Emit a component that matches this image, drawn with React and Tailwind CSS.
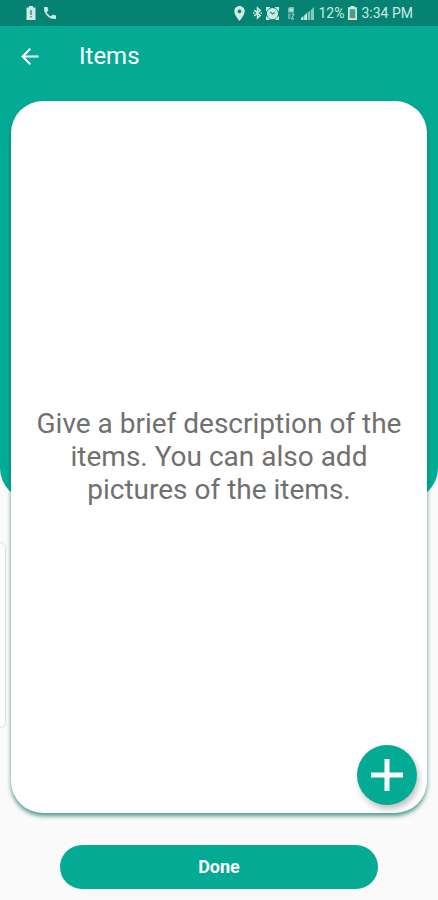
import { useState } from "react";

const DESCRIPTION =
  "Give a brief description of the items. You can also add pictures of the items.";

function BatteryAlertIcon() {
  return (
    <svg viewBox="0 0 10 14" className="w-[10px] h-[14px]" aria-hidden="true">
      <path fill="currentColor" d="M3 0h4v1.500h2.500V14h-9V1.500H3z" />
      <path fill="#2f8f80" d="M4.300 4h1.400v5H4.300zM4.300 10h1.400v1.500H4.300z" />
    </svg>
  );
}

function CallIcon() {
  return (
    <svg viewBox="3 3 18 18" className="w-3 h-3" fill="currentColor" stroke="currentColor" strokeWidth="0.600" aria-hidden="true">
      <path d="M6.620 10.790c1.440 2.830 3.760 5.140 6.590 6.590l2.200-2.200c.27-.27.67-.36 1.020-.24 1.120.37 2.330.57 3.570.57.55 0 1 .45 1 1V20c0 .55-.45 1-1 1C10.610 21 3 13.390 3 4c0-.55.45-1 1-1h3.500c.55 0 1 .45 1 1 0 1.250.2 2.450.57 3.570.11.35.03.74-.25 1.020z" />
    </svg>
  );
}

function LocationIcon() {
  return (
    <svg viewBox="5 2 14 20" className="w-[11px] h-[15px]" fill="currentColor" aria-hidden="true">
      <path d="M12 2C8.130 2 5 5.130 5 9c0 5.250 7 13 7 13s7-7.750 7-13c0-3.870-3.130-7-7-7zm0 9.500a2.500 2.500 0 1 1 0-5 2.500 2.500 0 0 1 0 5z" />
    </svg>
  );
}

function BluetoothIcon() {
  return (
    <svg viewBox="0 0 9 14" className="w-[9px] h-[14px]" fill="none" stroke="currentColor" strokeWidth="1.500" aria-hidden="true">
      <path d="M1.200 4l6 5.500L4.500 12v-10l2.700 2.500L1.200 10" />
      <path d="M0 7h1.400M7.600 7H9" />
    </svg>
  );
}

function AlarmIcon() {
  return (
    <svg viewBox="0 0 13 13" className="w-[13px] h-[13px]" aria-hidden="true">
      <circle cx="6.500" cy="6.700" r="5.600" fill="currentColor" />
      <path fill="currentColor" d="M0 0h4.500L0 4.500zM13 0H8.500L13 4.500zM0 9l4 3.500-1 .5H0zM13 9l-4 3.500 1 .5h3z" />
      <path d="M4.200 4.800l2.300 2.300 2.300-1.500" fill="none" stroke="#23897a" strokeWidth="1.200" />
    </svg>
  );
}

function SimIcon() {
  return (
    <svg viewBox="0 0 8 13" className="w-2 h-[13px]" aria-hidden="true">
      <path fill="currentColor" opacity="0.600" d="M1 1.500L2.500 0H7v5.500H1z" />
      <path fill="currentColor" opacity="0.450" d="M1 6.500h2.500V12H1z" />
      <path d="M3 2h2.500v2H3zM4.500 7H7L4.500 12H7" fill="none" stroke="currentColor" strokeWidth="0.900" />
    </svg>
  );
}

function SignalIcon() {
  return (
    <svg viewBox="0 0 13 13" className="w-[13px] h-[13px]" fill="currentColor" aria-hidden="true">
      <path d="M0 13v-2l2.500-2v4zM3.200 13V8.400L6 6v7z" />
      <path d="M6.700 13V5.500l2.600-2V13zM10 13V3l3-3v13z" opacity="0.650" />
    </svg>
  );
}

function BatteryLowIcon() {
  return (
    <svg viewBox="0 0 9 14" className="w-[9px] h-[14px]" aria-hidden="true">
      <path fill="currentColor" d="M2.500 0h4v1.300H9V14H0V1.300h2.500z" />
      <path fill="#4b9d91" d="M1.700 3.200h5.600v7.800H1.700z" />
      <path fill="#c46a62" d="M1.700 11h5.600v1.200H1.700z" />
    </svg>
  );
}

function BackIcon() {
  return (
    <svg viewBox="0 0 18 17" className="w-[18px] h-[17px]" fill="none" stroke="currentColor" strokeWidth="2" aria-hidden="true">
      <path d="M17.500 8.500H1.500M9.300 .8L1.600 8.500l7.700 7.700" />
    </svg>
  );
}

function PlusIcon() {
  return (
    <svg viewBox="0 0 32 32" className="w-8 h-8" fill="currentColor" aria-hidden="true">
      <path d="M13.500 0h5v13.500H32v5H18.500V32h-5V18.500H0v-5h13.500z" />
    </svg>
  );
}

function StatusBar() {
  return (
    <div className="flex h-[26px] items-center justify-between bg-[#058272] pl-[26px] pr-[25px] text-[#cdebe4]">
      <div className="flex items-center gap-2">
        <BatteryAlertIcon />
        <CallIcon />
      </div>

      <div className="flex items-center gap-1 text-sm">
        <LocationIcon />
        <div className="flex items-center gap-1 pl-1">
          <BluetoothIcon />
          <AlarmIcon />
        </div>
        <div className="flex items-center gap-1.5 pl-1">
          <SimIcon />
          <SignalIcon />
        </div>
        <span>12%</span>
        <BatteryLowIcon />
        <span>3:34 PM</span>
      </div>
    </div>
  );
}

export default function App() {
  const [items, setItems] = useState([]);

  return (
    <div className="relative isolate flex min-h-screen flex-col overflow-hidden bg-[#fafafa] font-['Roboto',sans-serif]">

      {/* GREEN BACKDROP */}
      <div className="absolute inset-x-0 top-0 -z-10 h-[500px] rounded-b-[32px] bg-[#04ab94]" />

      {/* EDGE PANEL HANDLE */}
      <div className="absolute -left-2 top-[542px] -z-10 h-[186px] w-[14px] rounded-md border border-[#dddddd] bg-white" />

      <StatusBar />

      {/* APP BAR */}
      <header className="flex h-[60px] items-center gap-10 pl-[21px] text-white">
        <button type="button" aria-label="Back">
          <BackIcon />
        </button>
        <h1 className="text-2xl">Items</h1>
      </header>

      {/* CARD */}
      <main className="relative mx-[11px] mt-[15px] mb-8 flex flex-1 flex-col items-center justify-center rounded-[32px] bg-white px-5 pb-0.5 shadow-[0_3px_4px_#04705fb0]">
        {items.length === 0 ? (
          <p className="text-center text-[28px] leading-[33px] text-[#707070]">
            {DESCRIPTION}
          </p>
        ) : (
          <ul className="text-xl text-[#707070]">
            {items.map((item, i) => (
              <li key={i}>{item}</li>
            ))}
          </ul>
        )}

        <button
          type="button"
          aria-label="Add item"
          onClick={() => setItems((prev) => [...prev, `Item ${prev.length + 1}`])}
          className="absolute right-[10px] bottom-2 flex size-[60px] items-center justify-center rounded-full bg-[#04ab94] text-white shadow-[2px_4px_6px_#00000040]"
        >
          <PlusIcon />
        </button>
      </main>

      {/* FOOTER */}
      <footer className="mb-[11px] px-[60px]">
        <button
          type="button"
          className="h-11 w-full rounded-full bg-[#04ab94] text-lg font-bold text-white"
        >
          Done
        </button>
      </footer>

    </div>
  );
}
